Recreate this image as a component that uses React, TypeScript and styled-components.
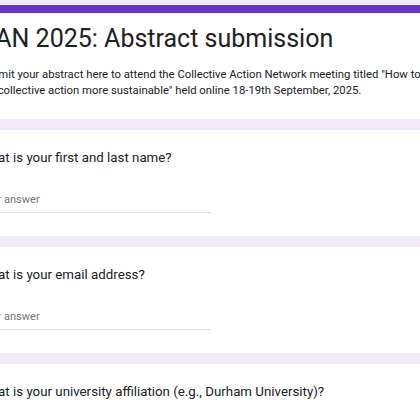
import styled, { createGlobalStyle } from "styled-components";

const GlobalStyle = createGlobalStyle`
  html, body {
    margin: 0;
    padding: 0;
    background: #f0ebf8;
    overflow: hidden;
  }
  body {
    font-family: Roboto, "Liberation Sans", sans-serif;
    color: #202124;
  }
`;

const questions = [
  { id: "name", label: "What is your first and last name?", input: true },
  { id: "email", label: "What is your email address?", input: true },
  {
    id: "affiliation",
    label: "What is your university affiliation (e.g., Durham University)?",
    input: true,
  },
];

const App: React.FC = () => {
  return (
    <>
      <GlobalStyle />
      <Page>
        <HeaderCard>
          <Title>CAN 2025: Abstract submission</Title>
          <Description>
            Submit your abstract here to attend the Collective Action Network
            meeting titled "How to make the collective action more sustainable"
            held online 18-19th September, 2025.
          </Description>
        </HeaderCard>
        {questions.map((q) => (
          <QuestionCard key={q.id}>
            <QuestionLabel>{q.label}</QuestionLabel>
            {q.input && <AnswerInput placeholder="Your answer" />}
          </QuestionCard>
        ))}
      </Page>
    </>
  );
};

const Page = styled.div`
  display: flex;
  flex-direction: column;
  gap: 11px;
  width: 540px;
  margin-left: -45px;
  padding-top: 5px;
`;

const Card = styled.div`
  background: #fff;
  padding: 0 24px;
  box-sizing: border-box;
`;

const HeaderCard = styled(Card)`
  border-top: 8px solid #673ab7;
  height: 114px;
  padding-top: 10px;
`;

const Title = styled.h1`
  margin: 0;
  font-family: Roboto, "Liberation Sans", sans-serif;
  font-size: 25px;
  font-weight: 400;
  line-height: 32px;
  color: #202124;
`;

const Description = styled.p`
  margin: 12px 0 0;
  font-size: 11.3px;
  line-height: 16px;
  color: #202124;
  width: 480px;
`;

const QuestionCard = styled(Card)`
  height: 106px;
  padding-top: 18px;
`;

const QuestionLabel = styled.div`
  font-size: 13.3px;
  line-height: 20px;
  color: #202124;
`;

const AnswerInput = styled.input`
  display: block;
  margin-top: 25px;
  width: 232px;
  padding: 0 0 6px;
  border: none;
  border-bottom: 1px solid #e0e0e0;
  outline: none;
  background: transparent;
  font-family: Roboto, "Liberation Sans", sans-serif;
  font-size: 11px;
  color: #202124;

  &::placeholder {
    color: #70757a;
  }
`;

export default App;
